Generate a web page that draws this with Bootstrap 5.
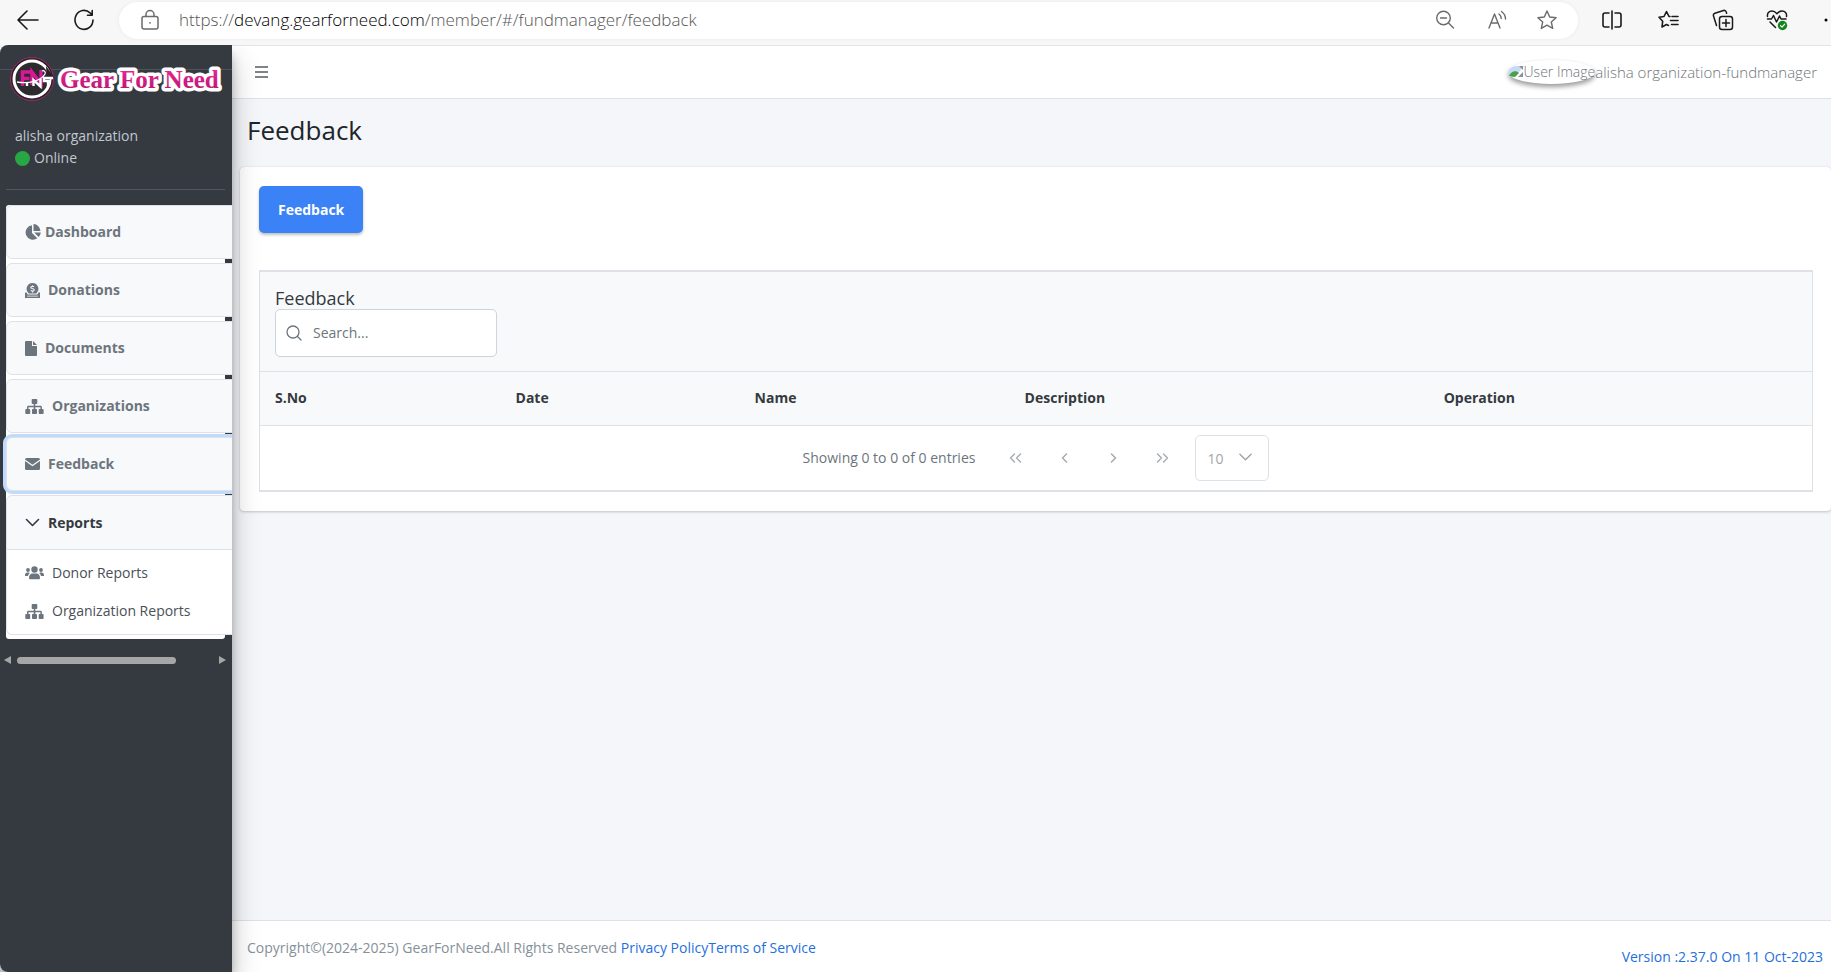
<!DOCTYPE html>
<html lang="en">
<head>
<meta charset="utf-8">
<meta name="viewport" content="width=device-width, initial-scale=1">
<title>Feedback - Gear For Need</title>
<link href="https://cdn.jsdelivr.net/npm/bootstrap@5.3.0/dist/css/bootstrap.min.css" rel="stylesheet">
<style>
:root { --line: #dee2e6; --panel: #f8f9fa; --muted: #6c757d; }
body { font-family: "Open Sans", "Noto Sans", sans-serif; font-size: 14px; line-height: 22px; color: #343a40; background: #f7f7f7; }
a { text-decoration: none; }
svg { display: block; flex: none; }
.line-icon { fill: none; stroke: currentColor; stroke-linecap: round; stroke-linejoin: round; }

/* browser bar */
.browser-bar { height: 45px; padding: 2px 0 7px 15px; color: #1b1b1b; overflow: hidden; }
.browser-bar button, .plain-btn { border: 0; background: none; padding: 0; color: inherit; }
.address { background: #fff; border-radius: 20px; height: 37px; padding: 0 20px 0 22px; color: #6b6b6b; box-shadow: 0 0 4px rgba(0,0,0,.06); }
.url { font-size: 17px; line-height: 24px; font-weight: 300; color: #555; white-space: nowrap; }
.url b { font-weight: 300; color: #000; }

/* frame */
.app { overflow: hidden; }
.side { width: 232px; flex: none; background: #343a40; color: #c2c7d0; border-radius: 8px 0 0 8px; overflow: hidden; }
.side-wrap { box-shadow: 0 14px 28px rgba(0,0,0,.25), 0 10px 10px rgba(0,0,0,.22); z-index: 2; border-radius: 8px 0 0 8px; }
.brand { height: 70px; padding: 5px 0 0 10px; background: linear-gradient(#4b545c, #4b545c) 0 24px / 100% 1px no-repeat; }
.user-box { margin: 0 7px 15px 6px; padding: 10px 9px 20px; border-bottom: 1px solid #4f5962; }
.dot { width: 15px; height: 15px; border-radius: 50%; background: #28a745; }
.menu-clip { padding: 0 7px 0 6px; overflow: hidden; }
.menu-list { background: #fff; border-radius: 3px; padding-bottom: 4px; }
.entry { width: 232px; height: 54px; margin-bottom: 4px; padding-left: 18px; background: var(--panel); border: 1px solid var(--line); border-radius: 6px; font-weight: 700; color: var(--muted); }
.entry:hover { color: #343a40; }
.entry.current { box-shadow: 0 0 0 3px #bfdbfe; position: relative; }
.entry.open { height: 55px; margin: 0; border-radius: 6px 6px 0 0; color: #343a40; }
.sub { width: 232px; padding: 4px 0; border: 1px solid var(--line); border-top: 0; border-radius: 0 0 0 6px; background: #fff; }
.sub a { height: 38px; padding-left: 18px; color: #495057; }
.sub svg { color: var(--muted); }
.scroller { height: 14px; margin: 14px 5px 0 4px; color: #a6a6a6; }
.thumb { width: 159px; height: 7px; border-radius: 4px; background: #a6a6a6; margin: 0 43px 0 6px; }

/* top bar */
.topbar { height: 54px; background: #fff; border-bottom: 1px solid var(--line); border-top: 1px solid #e4e4e4; padding: 0 14px 0 23px; color: #808488; }
.avatar { height: 24px; border-radius: 50%; box-shadow: 0 3px 5px rgba(0,0,0,.4); font-weight: 300; color: #6f7479; }
.who { font-weight: 300; font-size: 15px; color: #6f7479; }

/* content */
.content { background: #f4f6f9; }
.page-title { font-size: 26px; line-height: 32px; font-weight: 500; color: #212529; padding: 15px 0 21px 15px; margin: 0; }
.main-card { margin-left: 8px; background: #fff; border-radius: 4px; padding: 19px 18px 19px 19px; box-shadow: 0 0 1px rgba(0,0,0,.15), 0 1px 3px rgba(0,0,0,.2); }
.btn-main { height: 47px; padding: 0 19px; background: #3b82f6; border-radius: 5px; color: #fff; font-weight: 700; font-size: 14px; border: 0; box-shadow: 0 2px 3px rgba(0,0,0,.25); }
.btn-main:hover { background: #2563eb; color: #fff; }
.grid-box { margin-top: 37px; border: 1px solid var(--line); border-width: 2px 1px; }
.grid-head { background: var(--panel); padding: 16px 15px 14px; border-bottom: 1px solid var(--line); }
.grid-head h2 { font-size: 18px; line-height: 21px; font-weight: 500; margin: 0; }
.search { width: 222px; height: 48px; background: #fff; border: 1px solid #ced4da; border-radius: 5px; padding: 0 10px; gap: 11px; color: var(--muted); }
.search input { border: 0; outline: 0; min-width: 0; background: none; padding: 0; }
.search input::placeholder { color: var(--muted); opacity: 1; }
.grid-table { width: 100%; table-layout: fixed; }
.grid-table th { height: 53px; padding: 0 15px; background: var(--panel); border-bottom: 1px solid var(--line); font-weight: 700; }
.pager { height: 64px; color: var(--muted); }
.pager button { width: 49px; height: 46px; color: #a5aaae; }
.rows { width: 74px; height: 46px; margin-left: 8px; padding: 2px 10px 0 11px; border: 1px solid var(--line); border-radius: 5px; color: #a2a6aa; font-size: 14px; background: #fff url("data:image/svg+xml,%3Csvg xmlns='http://www.w3.org/2000/svg' viewBox='0 0 14 9'%3E%3Cpath d='M1 1l6 6 6-6' fill='none' stroke='%23a2a6aa' stroke-width='1.6' stroke-linecap='round'/%3E%3C/svg%3E") right 16px center / 13px 9px no-repeat; appearance: none; opacity: 1; }
.foot { height: 52px; background: #fff; border-top: 1px solid var(--line); padding: 0 8px 0 15px; color: #869099; }
.foot a { color: #1f6fdc; }
</style>
</head>
<body>
<svg class="d-none">
  <symbol id="sitemap" viewBox="0 0 19 15"><path fill="currentColor" d="M7.500 0h4a.8.8 0 0 1 .8.8v3.400a.8.8 0 0 1-.8.8h-1.200v1.800h5.200c.8 0 1.400.6 1.400 1.400V10h.9a.8.8 0 0 1 .8.8v3.400a.8.8 0 0 1-.8.8h-3.300a.8.8 0 0 1-.8-.8v-3.400a.8.8 0 0 1 .8-.8h.9V8.300h-5.100V10h.9a.8.8 0 0 1 .8.8v3.400a.8.8 0 0 1-.8.8H7.800a.8.8 0 0 1-.8-.8v-3.400a.8.8 0 0 1 .8-.8h.9V8.300H3.500V10h.9a.8.8 0 0 1 .8.8v3.400a.8.8 0 0 1-.8.8H1.100a.8.8 0 0 1-.8-.8v-3.400a.8.8 0 0 1 .8-.8H2V8.200c0-.8.600-1.400 1.400-1.400h5.300V5H7.500a.8.8 0 0 1-.8-.8V.8a.8.8 0 0 1 .8-.8z"/></symbol>
</svg>
<div class="d-flex flex-column min-vh-100">
  <header class="browser-bar d-flex align-items-center">
    <button type="button" aria-label="Back"><svg class="line-icon" width="26" height="20" viewBox="0 0 26 20" stroke-width="1.600"><path d="M23 10H3M12 1L3 10l9 9"/></svg></button>
    <button type="button" aria-label="Refresh" class="ms-4 ps-2"><svg class="line-icon" width="22" height="22" viewBox="0 0 22 22" stroke-width="1.600"><path d="M20 11a9 9.500 0 1 1-3-7.200L19 6M19.200 1.500V6.200H14.500"/></svg></button>
    <div class="address d-flex align-items-center flex-grow-1 ms-4">
      <svg class="line-icon" width="18" height="22" viewBox="1 0 18 22" stroke-width="1.500"><rect x="2" y="7.500" width="16" height="12.500" rx="2"/><path d="M6 7.500V5.500a4 4 0 0 1 8 0v2"/><circle cx="10" cy="13.800" r=".9" fill="currentColor" stroke="none"/></svg>
      <div class="url ms-3 ps-1 flex-grow-1">https://<b>devang.gearforneed.com</b>/member/#/fundmanager/feedback</div>
      <div class="d-flex align-items-center gap-4">
        <button type="button" aria-label="Zoom out" class="pe-1"><svg class="line-icon" width="20" height="20" viewBox="0 0 20 20" stroke-width="1.400"><circle cx="8.500" cy="8" r="6.800"/><path d="M5.500 8h6M13.500 13l5 5"/></svg></button>
        <button type="button" aria-label="Read aloud" class="px-1"><svg class="line-icon" width="21" height="20" viewBox="0 0 21 20" stroke-width="1.400"><path d="M2 18L7.500 4 13 18M4 13h7M12 4c1.500 1.200 2.200 2.800 2.200 4.500M14.500 1.500c2.800 2 4 4.500 4 7.500"/></svg></button>
        <button type="button" aria-label="Add to favorites"><svg class="line-icon" width="22" height="22" viewBox="0 0 22 22" stroke-width="1.400"><path d="M11 2l2.700 6 6.400.7-4.800 4.300 1.400 6.400L11 16.200l-5.700 3.200 1.400-6.400L1.900 8.700 8.300 8z"/></svg></button>
      </div>
    </div>
    <div class="d-flex align-items-center ms-1 ps-3 gap-4">
      <button type="button" aria-label="Split screen" class="px-1"><svg class="line-icon" width="20" height="20" viewBox="0 0 20 20" stroke-width="1.600"><path d="M7 3H3a2 2 0 0 0-2 2v10a2 2 0 0 0 2 2h4M13 3h4a2 2 0 0 1 2 2v10a2 2 0 0 1-2 2h-4M10 1v18"/></svg></button>
      <button type="button" aria-label="Favorites" class="px-2"><svg class="line-icon" width="22" height="20" viewBox="0 0 22 20" stroke-width="1.600"><path d="M12 6.500h-1L8.500 1.500 6 6.500l-5 .8 3.700 3.900L4 17l4.500-2.500M14 6.500h6M12.500 10.500h7.500M13.500 14.500h6.500M8.500 14.500l2 1"/></svg></button>
      <button type="button" aria-label="Collections" class="pe-1"><svg class="line-icon" width="22" height="22" viewBox="0 0 22 22" stroke-width="1.500"><rect x="7.500" y="7.500" width="13" height="13" rx="2.500"/><path d="M14 10.500v7M10.500 14h7M4.500 16.500l-3-9.500c-.400-1.300.2-2.300 1.400-2.700l8.600-2.800c1.200-.4 2.300.2 2.700 1.400l.4 1.300"/></svg></button>
      <button type="button" aria-label="Browser essentials" class="px-1"><svg class="line-icon" width="22" height="22" viewBox="0 0 22 22" stroke-width="1.500"><path d="M1.500 7.500C1 4 3 2 6 2c2 0 3.500 1 5 2.700C12.500 3 14 2 16 2c3 0 5 2 4.500 5.500M1.500 10h4l2-3.500 3 6.500 3-6 1.500 3h5M4 13l5.500 5.500"/><circle cx="16.500" cy="16.500" r="4.700" fill="#16841d" stroke="none"/><path d="M14.500 16.700l1.500 1.500 2.700-3" stroke="#fff" stroke-width="1.200"/></svg></button>
      <button type="button" aria-label="Settings and more" class="ps-2"><svg width="7" height="4" viewBox="0 0 7 4"><circle cx="2" cy="2" r="1.500"/></svg></button>
    </div>
  </header>

  <div class="app d-flex flex-grow-1">
    <div class="side-wrap d-flex">
    <aside class="side">
      <a href="#" class="brand d-flex align-items-start" aria-label="Gear For Need">
        <svg width="218" height="54" viewBox="0 0 218 54">
          <defs><linearGradient id="pink" x1="0" y1="0" x2="0" y2="1"><stop offset="0" stop-color="#ee2a9a"/><stop offset="1" stop-color="#b5126f"/></linearGradient></defs>
          <circle cx="22" cy="29" r="21.500" fill="#2b2027" stroke="#9c2b66"/>
          <circle cx="22" cy="29" r="18" fill="#2c2c2e" stroke="#fff" stroke-width="3"/>
          <path d="M36 16l8 11-7 4z" fill="#2b2027"/>
          <g fill="none" stroke="#d81896" stroke-width="3.400"><path d="M12.500 36V22h9M12.500 28.500h7"/><path d="M22 35V22l9 12V20"/></g>
          <g fill="none" stroke="#fff"><path d="M17 36v-4M23.500 36v-6l7 6.500V29" stroke-width="2.400"/><path d="M43 28h-9v3h4v6" stroke-width="2.400"/><path d="M7 32c12 2 24-1 28-8 1-2-1-4-3-3" stroke-width="1.300"/></g>
          <text x="50" y="38" font-family="'Liberation Serif',serif" font-weight="700" font-size="25" fill="url(#pink)" stroke="#fff" stroke-width="7" stroke-linejoin="round" paint-order="stroke">Gear For Need</text>
        </svg>
      </a>
      <div class="user-box">
        <div>alisha organization</div>
        <div class="d-flex align-items-center gap-1"><span class="dot"></span>Online</div>
      </div>
      <nav class="menu-clip" aria-label="Main">
        <div class="menu-list">
          <a href="#" class="entry d-flex align-items-center gap-1"><svg width="16" height="16" viewBox="0 0 16 16" fill="currentColor"><path d="M7 1.200V9l5.300 5.300A7.300 7.300 0 1 1 7 1.200zM8.500 0a7.300 7.300 0 0 1 7 7h-7zM9.200 8.500h6.600a7.300 7.300 0 0 1-2.200 4.600z"/></svg>Dashboard</a>
          <a href="#" class="entry d-flex align-items-center gap-2"><svg width="15" height="15" viewBox="0 0 15 15" fill="currentColor"><path fill-rule="evenodd" d="M7.500 0a5.800 5.800 0 0 1 4.700 9.300l-.9 1.200H3.700l-.9-1.200A5.800 5.800 0 0 1 7.500 0zM7 2.200v.8c-1 .1-1.700.7-1.700 1.500 0 1 .9 1.300 1.900 1.600 1 .3 1.300.4 1.300.8 0 .4-.4.6-1 .6-.6 0-1.100-.2-1.500-.5l-.5 1c.4.3.9.5 1.500.5v.9h1v-.9c1-.1 1.700-.7 1.700-1.600 0-1-.8-1.400-1.900-1.700-1-.3-1.300-.4-1.300-.8 0-.3.400-.5 1-.5.5 0 .9.100 1.300.4l.5-1c-.4-.3-.9-.4-1.600-.4v-.7zM0 9.500h1.500l1.200 2h9.600l1.200-2H15V15H0zM2 12.800v.8h11v-.8z"/></svg>Donations</a>
          <a href="#" class="entry d-flex align-items-center gap-2"><svg width="12" height="15" viewBox="0 0 12 15" fill="currentColor"><path d="M1 0h6v5h5v9a1 1 0 0 1-1 1H1a1 1 0 0 1-1-1V1a1 1 0 0 1 1-1zM8 0l4 4H8z"/></svg>Documents</a>
          <a href="#" class="entry d-flex align-items-center gap-2"><svg width="19" height="15"><use href="#sitemap"/></svg>Organizations</a>
          <a href="#" class="entry current d-flex align-items-center gap-2"><svg width="15" height="12" viewBox="0 0 15 12" fill="currentColor"><path d="M1.500 0h12A1.500 1.500 0 0 1 15 1.500L7.500 6.700 0 1.500A1.500 1.500 0 0 1 1.500 0zM0 3l7.500 5.200L15 3v7.500a1.500 1.500 0 0 1-1.500 1.500h-12A1.500 1.500 0 0 1 0 10.500z"/></svg>Feedback</a>
          <a href="#" class="entry open d-flex align-items-center gap-2" aria-expanded="true"><svg class="line-icon" width="15" height="9" viewBox="0 0 15 9" stroke-width="1.600"><path d="M1.500 1.500l6 6 6-6"/></svg>Reports</a>
          <div class="sub">
            <a href="#" class="d-flex align-items-center gap-2"><svg width="19" height="14" viewBox="0 0 19 14" fill="currentColor"><circle cx="9.500" cy="3.500" r="3.200"/><circle cx="3" cy="4" r="1.900"/><circle cx="16" cy="4" r="1.900"/><path d="M4 12c0-3 1.500-4.500 3.500-4.500h4C13.500 7.500 15 9 15 12c0 .8-.6 1.300-1.300 1.300H5.300C4.600 13.300 4 12.800 4 12zM0 10V9c0-1.500 1-2.400 2.200-2.400h1.300c.6 0 1 .2 1.400.5C3.700 7.900 3.200 9 3 10zM19 10V9c0-1.500-1-2.400-2.200-2.400h-1.300c-.6 0-1 .2-1.400.5 1.200.8 1.700 1.900 1.900 2.900z"/></svg>Donor Reports</a>
            <a href="#" class="d-flex align-items-center gap-2"><svg width="19" height="15"><use href="#sitemap"/></svg>Organization Reports</a>
          </div>
        </div>
      </nav>
      <div class="scroller d-flex align-items-center">
        <svg width="7" height="8" viewBox="0 0 7 8" fill="currentColor"><path d="M7 0v8L0 4z"/></svg>
        <div class="thumb"></div>
        <svg width="7" height="8" viewBox="0 0 7 8" fill="currentColor"><path d="M0 0v8l7-4z"/></svg>
      </div>
    </aside>
    </div>

    <div class="content d-flex flex-column flex-grow-1">
      <div class="topbar d-flex align-items-center justify-content-between">
        <button type="button" class="plain-btn" aria-label="Toggle menu"><svg width="13" height="12" viewBox="0 0 13 12" fill="currentColor"><path d="M0 0h13v2H0zM0 5h13v2H0zM0 10h13v2H0z"/></svg></button>
        <div class="d-flex align-items-center">
          <span class="avatar d-flex align-items-center"><svg width="16" height="14" viewBox="0 0 16 14"><path d="M0 8a9 8 0 0 1 7-7h9L7 12H1z" fill="#c6d9f5"/><path d="M1 11c2-5 7-6 10-3l-4 4z" fill="#4ba046"/><path d="M10 12l5-5v5zM11 1h4v4z" fill="#8b9096"/></svg>User Image</span><span class="who">alisha organization-fundmanager</span>
        </div>
      </div>
      <main class="flex-grow-1">
        <h1 class="page-title">Feedback</h1>
        <section class="main-card">
          <button type="button" class="btn btn-main">Feedback</button>
          <div class="grid-box">
            <div class="grid-head">
              <h2>Feedback</h2>
              <label class="search d-flex align-items-center">
                <svg class="line-icon" width="16" height="16" viewBox="0 0 16 16" stroke-width="1.300"><circle cx="7" cy="7" r="6"/><path d="M11.500 11.500L15 15"/></svg>
                <input type="text" placeholder="Search..." aria-label="Search feedback">
              </label>
            </div>
            <table class="grid-table">
              <colgroup><col style="width:15.500%"><col style="width:15.400%"><col style="width:17.400%"><col style="width:27%"><col></colgroup>
              <thead><tr><th>S.No</th><th>Date</th><th>Name</th><th>Description</th><th>Operation</th></tr></thead>
              <tbody></tbody>
            </table>
            <div class="pager d-flex align-items-center justify-content-center">
              <span class="me-3">Showing 0 to 0 of 0 entries</span>
              <button type="button" class="plain-btn" aria-label="First page"><svg class="line-icon mx-auto" width="13" height="10" viewBox="0 0 13 10" stroke-width="1.400"><path d="M5.500 1l-4 4 4 4M11.500 1l-4 4 4 4"/></svg></button>
              <button type="button" class="plain-btn" aria-label="Previous page"><svg class="line-icon mx-auto" width="7" height="10" viewBox="0 0 7 10" stroke-width="1.500"><path d="M5.500 1l-4 4 4 4"/></svg></button>
              <button type="button" class="plain-btn" aria-label="Next page"><svg class="line-icon mx-auto" width="7" height="10" viewBox="0 0 7 10" stroke-width="1.500"><path d="M1.500 1l4 4-4 4"/></svg></button>
              <button type="button" class="plain-btn" aria-label="Last page"><svg class="line-icon mx-auto" width="13" height="10" viewBox="0 0 13 10" stroke-width="1.400"><path d="M1.500 1l4 4-4 4M7.500 1l4 4-4 4"/></svg></button>
              <select class="rows" aria-label="Rows per page" disabled><option>10</option></select>
            </div>
          </div>
        </section>
      </main>
      <footer class="foot d-flex justify-content-between">
        <div class="pt-3">Copyright©(2024-2025) GearForNeed.All Rights Reserved <a href="#">Privacy Policy</a><a href="#">Terms of Service</a></div>
        <a href="#" class="align-self-end pb-1">Version :2.37.0 On 11 Oct-2023</a>
      </footer>
    </div>
  </div>
</div>
<script src="https://cdn.jsdelivr.net/npm/bootstrap@5.3.0/dist/js/bootstrap.bundle.min.js"></script>
</body>
</html>
